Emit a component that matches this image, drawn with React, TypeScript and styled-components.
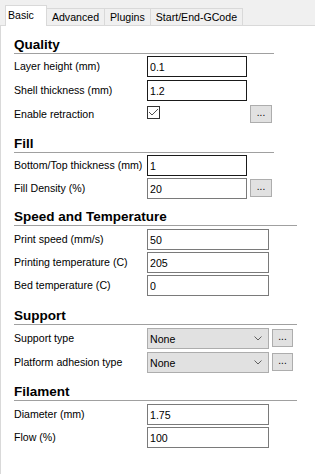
import React from "react";
import styled, { createGlobalStyle } from "styled-components";

const GlobalStyle = createGlobalStyle`
  html, body { margin: 0; padding: 0; background: #ffffff; }
  * { box-sizing: border-box; }
`;

const Window = styled.div`
  width: 315px;
  height: 474px;
  background: #f0f0f0;
  display: flex;
  flex-direction: column;
  font-family: "Liberation Sans", Arial, sans-serif;
  font-size: 10.6px;
  color: #000;
  overflow: hidden;
`;

const TabBar = styled.div`
  height: 25px;
  flex: none;
  display: flex;
  align-items: flex-end;
  padding-left: 5px;
  position: relative;
  z-index: 1;
`;

const Tab = styled.div<{ $active?: boolean }>`
  height: ${(p) => (p.$active ? 21 : 17)}px;
  margin-bottom: ${(p) => (p.$active ? -1 : 0)}px;
  margin-left: -1px;
  &:first-child { margin-left: 0; }
  border: 1px solid #d9d9d9;
  border-bottom: none;
  background: ${(p) => (p.$active ? "#ffffff" : "#f0f0f0")};
  padding: ${(p) => (p.$active ? "3px 12px 0 2px" : "2px 5px 0 5px")};
  line-height: 13px;
  white-space: nowrap;
  position: relative;
  z-index: ${(p) => (p.$active ? 2 : 1)};
`;

const Pane = styled.div`
  flex: 1;
  background: #ffffff;
  border-top: 1px solid #d9d9d9;
  border-left: 1px solid #d9d9d9;
  padding: 11px 0 0 13px;
  display: flex;
  flex-direction: column;
`;

const Heading = styled.div<{ $width: number; $gap: number }>`
  width: ${(p) => p.$width}px;
  margin-top: ${(p) => p.$gap}px;
  height: 17px;
  border-bottom: 1px solid #a0a0a0;
  font-weight: bold;
  font-size: 13.5px;
  line-height: 15px;
  white-space: nowrap;
`;

const Rows = styled.div<{ $pad: number }>`
  padding-top: ${(p) => p.$pad}px;
  display: flex;
  flex-direction: column;
`;

const Row = styled.div<{ $h: number }>`
  height: ${(p) => p.$h}px;
  display: flex;
  align-items: flex-start;
`;

const Label = styled.span`
  width: 133px;
  flex: none;
  line-height: 21px;
  white-space: nowrap;
`;

const TextBox = styled.input<{ $w: number; $dark?: boolean }>`
  width: ${(p) => p.$w}px;
  height: 21px;
  flex: none;
  border: 1px solid ${(p) => (p.$dark ? "#1a1a1a" : "#7a7a7a")};
  background: #fff;
  padding: 0 2px;
  margin: 0;
  font: inherit;
  color: #000;
  outline: none;
`;

const Combo = styled.div`
  width: 122px;
  height: 21px;
  flex: none;
  border: 1px solid #adadad;
  background: #e1e1e1;
  display: flex;
  align-items: center;
  justify-content: space-between;
  padding: 0 6px 0 2px;
`;

const CheckSlot = styled.div`
  width: 100px;
  flex: none;
  padding-top: 2px;
`;

const CheckBox = styled.div`
  width: 13px;
  height: 13px;
  border: 1px solid #333;
  background: #fff;
  display: flex;
  align-items: center;
  justify-content: center;
`;

const DotsButton = styled.button<{ $w: number; $gap: number }>`
  width: ${(p) => p.$w}px;
  height: 18px;
  flex: none;
  margin: 1px 0 0 ${(p) => p.$gap}px;
  padding: 0 0 3px;
  border: 1px solid #adadad;
  background: #e1e1e1;
  font: inherit;
  font-size: 10px;
  color: #000;
  line-height: 12px;
`;

const Check = () => (
  <svg width="11" height="11" viewBox="0 0 11 11">
    <polyline points="1,5 4,8 10,2" fill="none" stroke="#505050" strokeWidth="1" />
  </svg>
);

const Chevron = () => (
  <svg width="8" height="5" viewBox="0 0 8 5">
    <polyline points="0.5,0.5 4,4 7.5,0.5" fill="none" stroke="#606060" strokeWidth="1" />
  </svg>
);

export default function App() {
  return (
    <>
      <GlobalStyle />
      <Window>
        <TabBar>
          <Tab $active>Basic</Tab>
          <Tab>Advanced</Tab>
          <Tab>Plugins</Tab>
          <Tab>Start/End-GCode</Tab>
        </TabBar>
        <Pane>
          <Heading $width={260} $gap={0}>Quality</Heading>
          <Rows $pad={2}>
            <Row $h={24}>
              <Label>Layer height (mm)</Label>
              <TextBox $w={100} $dark readOnly value="0.1" />
            </Row>
            <Row $h={24}>
              <Label>Shell thickness (mm)</Label>
              <TextBox $w={100} $dark readOnly value="1.2" />
            </Row>
            <Row $h={24}>
              <Label>Enable retraction</Label>
              <CheckSlot>
                <CheckBox>
                  <Check />
                </CheckBox>
              </CheckSlot>
              <DotsButton $w={22} $gap={3}>...</DotsButton>
            </Row>
          </Rows>

          <Heading $width={260} $gap={8}>Fill</Heading>
          <Rows $pad={2}>
            <Row $h={23}>
              <Label>Bottom/Top thickness (mm)</Label>
              <TextBox $w={100} $dark readOnly value="1" />
            </Row>
            <Row $h={23}>
              <Label>Fill Density (%)</Label>
              <TextBox $w={100} readOnly value="20" />
              <DotsButton $w={22} $gap={3}>...</DotsButton>
            </Row>
          </Rows>

          <Heading $width={283} $gap={8}>Speed and Temperature</Heading>
          <Rows $pad={3}>
            <Row $h={23}>
              <Label>Print speed (mm/s)</Label>
              <TextBox $w={122} readOnly value="50" />
            </Row>
            <Row $h={23}>
              <Label>Printing temperature (C)</Label>
              <TextBox $w={122} readOnly value="205" />
            </Row>
            <Row $h={23}>
              <Label>Bed temperature (C)</Label>
              <TextBox $w={122} readOnly value="0" />
            </Row>
          </Rows>

          <Heading $width={283} $gap={10}>Support</Heading>
          <Rows $pad={3}>
            <Row $h={24}>
              <Label>Support type</Label>
              <Combo>
                <span>None</span>
                <Chevron />
              </Combo>
              <DotsButton $w={21} $gap={3}>...</DotsButton>
            </Row>
            <Row $h={24}>
              <Label>Platform adhesion type</Label>
              <Combo>
                <span>None</span>
                <Chevron />
              </Combo>
              <DotsButton $w={21} $gap={3}>...</DotsButton>
            </Row>
          </Rows>

          <Heading $width={283} $gap={8}>Filament</Heading>
          <Rows $pad={3}>
            <Row $h={23}>
              <Label>Diameter (mm)</Label>
              <TextBox $w={122} readOnly value="1.75" />
            </Row>
            <Row $h={23}>
              <Label>Flow (%)</Label>
              <TextBox $w={122} readOnly value="100" />
            </Row>
          </Rows>
        </Pane>
      </Window>
    </>
  );
}
